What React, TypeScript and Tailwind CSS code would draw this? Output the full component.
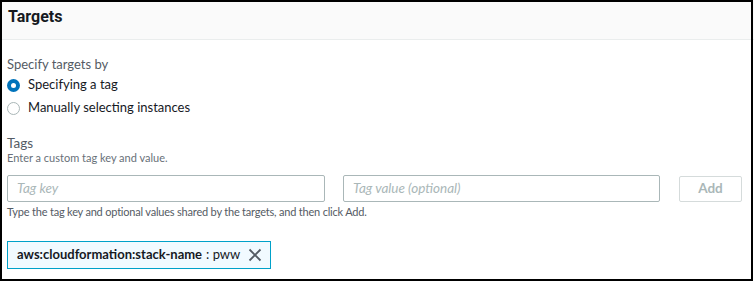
import React from "react";

export default function App() {
  return (
    <div className="w-[754px] h-[281px] bg-white relative overflow-hidden" style={{ fontFamily: 'Lato, Roboto, "Liberation Sans", sans-serif' }}>
      <div className="absolute left-0 top-0 w-[753px] h-[281px] border-2 border-black pointer-events-none z-10" />
      <div className="h-[40px] bg-[#fafafa] border-b border-[#eaeded] pl-[8px] pt-[6px]">
        <div className="text-[16px] font-bold text-[#16191f] leading-[22px]" style={{ fontFamily: 'Roboto, sans-serif' }}>Targets</div>
      </div>
      <div className="pl-[7px] pt-[14px]">
        <div className="text-[13px] text-[#545b64] leading-[20px]">Specify targets by</div>
        <div className="flex items-center h-[22px]">
          <span className="w-[13px] h-[13px] rounded-full bg-[#0073bb] flex items-center justify-center">
            <span className="w-[5px] h-[5px] rounded-full bg-white" />
          </span>
          <span className="ml-[8px] text-[13px] text-[#16191f]">Specifying a tag</span>
        </div>
        <div className="flex items-center h-[22px] mt-[1px]">
          <span className="w-[13px] h-[13px] rounded-full border border-[#aab7b8] bg-white" />
          <span className="ml-[8px] text-[13px] text-[#16191f]">Manually selecting instances</span>
        </div>
        <div className="mt-[15px] text-[13.5px] text-[#545b64] leading-[18px]">Tags</div>
        <div className="text-[11px] text-[#687078] leading-[12px]">Enter a custom tag key and value.</div>
        <div className="flex items-center mt-[11px]">
          <div className="w-[318px] h-[27px] border border-[#aab7b8] rounded-[2px] flex items-center pl-[9px] text-[13.5px] italic text-[#aab7b8]">Tag key</div>
          <div className="ml-[18px] w-[317px] h-[27px] border border-[#aab7b8] rounded-[2px] flex items-center pl-[9px] text-[13.5px] italic text-[#aab7b8]">Tag value (optional)</div>
          <div className="ml-[19px] w-[63px] h-[26px] border border-[#d5dbdb] rounded-[2px] flex items-center justify-center text-[13.5px] font-bold text-[#aab7b8]">Add</div>
        </div>
        <div className="mt-[2px] text-[11px] tracking-[-0.2px] text-[#545b64] leading-[16px]">Type the tag key and optional values shared by the targets, and then click Add.</div>
        <div className="mt-[21px] inline-flex items-center h-[28px] border border-[#00a1c9] bg-[#f1faff] pl-[9px] pr-[8px] text-[13px] text-[#16191f]">
          <span className="font-bold">aws:cloudformation:stack-name</span>
          <span className="ml-[4px]">: pww</span>
          <svg className="ml-[8px]" width="14" height="14" viewBox="0 0 14 14">
            <path d="M1.5 1.5 L12.5 12.5 M12.5 1.5 L1.5 12.5" stroke="#545b64" strokeWidth="1.8" />
          </svg>
        </div>
      </div>
    </div>
  );
}
